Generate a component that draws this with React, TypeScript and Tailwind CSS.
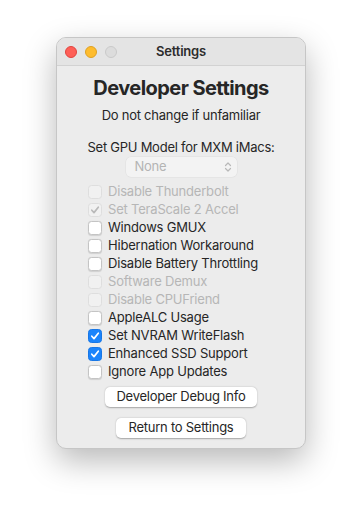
import React from 'react';

type Row = { label: string; checked?: boolean; disabled?: boolean };

const ROWS: Row[] = [
  { label: 'Disable Thunderbolt', disabled: true },
  { label: 'Set TeraScale 2 Accel', disabled: true, checked: true },
  { label: 'Windows GMUX' },
  { label: 'Hibernation Workaround' },
  { label: 'Disable Battery Throttling' },
  { label: 'Software Demux', disabled: true },
  { label: 'Disable CPUFriend', disabled: true },
  { label: 'AppleALC Usage' },
  { label: 'Set NVRAM WriteFlash', checked: true },
  { label: 'Enhanced SSD Support', checked: true },
  { label: 'Ignore App Updates' },
];

const Check = ({ color }: { color: string }) => (
  <svg width="10" height="10" viewBox="0 0 10 10" fill="none">
    <path d="M1.8 5.2 L4 7.6 L8.3 2.2" stroke={color} strokeWidth="1.7" strokeLinecap="round" strokeLinejoin="round" />
  </svg>
);

const CheckRow: React.FC<{ row: Row }> = ({ row }) => {
  let box = 'bg-white border border-[#c4c4c4] shadow-[0_0.5px_1px_rgba(0,0,0,0.12)]';
  if (row.disabled) box = 'bg-[#f1f1f1] border border-[#dedede]';
  else if (row.checked) box = 'bg-[#1b84fb] border border-[#1877e6]';

  return (
    <div className="flex h-[18px] items-center">
      <div className={`flex h-[14px] w-[14px] items-center justify-center rounded-[3.5px] ${box}`}>
        {row.checked && <Check color={row.disabled ? '#b9b9b9' : '#ffffff'} />}
      </div>
      <span className={`ml-[6px] text-[13px] tracking-[-0.2px] ${row.disabled ? 'text-[#b6b6b6]' : 'text-[#262626]'}`}>
        {row.label}
      </span>
    </div>
  );
};

export default function App() {
  return (
    <div className="flex min-h-[524px] w-full justify-center bg-white pt-[37px]" style={{ fontFamily: 'Inter, "Noto Sans", sans-serif' }}>
      <div className="flex h-[412px] w-[250px] flex-col overflow-hidden rounded-[10px] border border-[#c6c6c6] bg-[#ececec] shadow-[0_12px_32px_rgba(0,0,0,0.28)]">
        {/* title bar */}
        <div className="relative flex h-[28px] shrink-0 items-center border-b border-[#d2d2d2] bg-[#e4e4e4]">
          <div className="ml-[8px] flex gap-[8px]">
            <span className="h-[12px] w-[12px] rounded-full border border-[#e0443e] bg-[#fe5f57]" />
            <span className="h-[12px] w-[12px] rounded-full border border-[#dea123] bg-[#febc2e]" />
            <span className="h-[12px] w-[12px] rounded-full border border-[#c9c9c9] bg-[#dcdcdc]" />
          </div>
          <div className="absolute inset-0 flex items-center justify-center text-[13px] font-semibold tracking-[-0.2px] text-[#2c2c2c]">
            Settings
          </div>
        </div>

        {/* content */}
        <div className="flex flex-col items-center tracking-[-0.25px]">
          <h1 className="mt-[10px] text-[20px] font-bold leading-[24px] tracking-[-0.55px] text-[#262626]">Developer Settings</h1>
          <p className="mt-[7px] text-[13px] leading-[16px] text-[#262626]">Do not change if unfamiliar</p>
          <p className="mt-[16px] text-[13px] leading-[16px] text-[#262626]">Set GPU Model for MXM iMacs:</p>
          <div className="mt-[2px] flex h-[20px] w-[111px] items-center justify-between rounded-[5px] bg-[#f3f3f3] pl-[9px] pr-[5px] shadow-[0_0_0_0.5px_rgba(0,0,0,0.06)]">
            <span className="text-[13px] text-[#b4b4b4]">None</span>
            <svg width="8" height="12" viewBox="0 0 8 12" fill="none">
              <path d="M1.5 4.5 L4 2 L6.5 4.5 M1.5 7.5 L4 10 L6.5 7.5" stroke="#b8b8b8" strokeWidth="1.2" strokeLinecap="round" strokeLinejoin="round" />
            </svg>
          </div>

          <div className="mt-[6px] flex w-full flex-col pl-[31px]">
            {ROWS.map(r => (
              <CheckRow key={r.label} row={r} />
            ))}
          </div>

          <button className="mt-[6px] flex h-[20px] w-[152px] items-center justify-center rounded-[5px] bg-white text-[13px] text-[#262626] shadow-[0_0.5px_1.5px_rgba(0,0,0,0.3)]">
            Developer Debug Info
          </button>
          <button className="mt-[11px] flex h-[20px] w-[130px] items-center justify-center rounded-[5px] bg-white text-[13px] text-[#262626] shadow-[0_0.5px_1.5px_rgba(0,0,0,0.3)]">
            Return to Settings
          </button>
        </div>
      </div>
    </div>
  );
}
